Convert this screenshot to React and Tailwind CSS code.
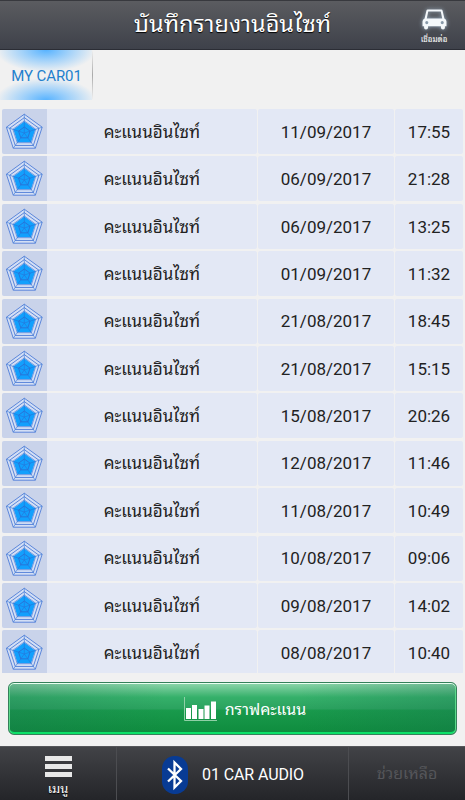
const records = [
  { date: "11/09/2017", time: "17:55" },
  { date: "06/09/2017", time: "21:28" },
  { date: "06/09/2017", time: "13:25" },
  { date: "01/09/2017", time: "11:32" },
  { date: "21/08/2017", time: "18:45" },
  { date: "21/08/2017", time: "15:15" },
  { date: "15/08/2017", time: "20:26" },
  { date: "12/08/2017", time: "11:46" },
  { date: "11/08/2017", time: "10:49" },
  { date: "10/08/2017", time: "09:06" },
  { date: "09/08/2017", time: "14:02" },
  { date: "08/08/2017", time: "10:40" },
];

function pentagon(r) {
  return [0, 1, 2, 3, 4]
    .map((i) => {
      const a = ((-90 + i * 72) * Math.PI) / 180;
      return `${(22.3 + r * Math.cos(a)).toFixed(2)},${(24 + r * Math.sin(a)).toFixed(2)}`;
    })
    .join(" ");
}

function RadarIcon() {
  return (
    <svg viewBox="0 0 45 45" className="block h-[45px] w-[45px]">
      <polygon points={pentagon(19)} fill="#d3dff5" />
      <polygon points={pentagon(11.5)} fill="#12a0fd" />
      <g fill="none" stroke="#5c86da" strokeWidth="1">
        <polygon points={pentagon(18.8)} />
        <polygon points={pentagon(15.4)} />
        <polygon points={pentagon(12)} opacity="0.8" />
      </g>
      <g fill="none" stroke="#2a6fd4">
        <polygon points={pentagon(6)} strokeWidth="0.9" />
        {pentagon(18.8)
          .split(" ")
          .map((p) => (
            <path key={p} d={`M22.3 24L${p}`} strokeWidth="0.8" opacity="0.7" />
          ))}
      </g>
    </svg>
  );
}

function CarIcon() {
  return (
    <svg
      viewBox="0 0 24 20"
      className="block h-[21px] w-[25px] drop-shadow-[0_0_2px_#9db4c8]"
    >
      <path
        fillRule="evenodd"
        fill="#f4f8fb"
        d="M5.500 0.500H18.500Q19.500 0.500 19.800 1.500L21.500 9Q23.500 9.800 23.500 12V16.500H22V18Q22 19.500 20.200 19.500Q18.200 19.500 18.200 18V16.500H5.800V18Q5.800 19.500 3.800 19.500Q2 19.500 2 18V16.500H0.500V12Q0.500 9.800 2.500 9L4.200 1.500Q4.500 0.500 5.500 0.500ZM6 2.300L4.600 9H19.400L18 2.300ZM4.600 11.500A1.500 1.500 0 1 0 4.600 14.500A1.500 1.500 0 1 0 4.600 11.500ZM19.400 11.500A1.500 1.500 0 1 0 19.400 14.500A1.500 1.500 0 1 0 19.400 11.500Z"
      />
    </svg>
  );
}

function ChartIcon() {
  return (
    <svg viewBox="0 0 33 25" className="block h-[25px] w-[33px]">
      <path d="M0.5 0V23.5H33" fill="none" stroke="#8fd0a6" />
      <path
        fill="#fff"
        d="M2 11h5v11H2zM8 8h5v14H8zM14.500 12h5v10h-5zM20.500 8.500h5V22h-5zM27 4.500h5V22h-5z"
      />
    </svg>
  );
}

function BluetoothIcon() {
  return (
    <svg viewBox="0 0 26 38" className="block h-[38px] w-[26px]">
      <rect width="26" height="38" rx="12.500" fill="#083b94" />
      <path
        d="M6 12.500L19 25L12.500 31.500V6.500L19 13L6 25.500"
        fill="none"
        stroke="#fff"
        strokeWidth="2.300"
      />
    </svg>
  );
}

function Header() {
  return (
    <header className="relative flex h-[50px] shrink-0 items-center justify-center border-t border-b border-t-[#38393e] border-b-[#2b2d35] bg-linear-to-b from-[#5b5c60] to-[#3e414a]">
      <h1 className="text-[23.5px] leading-none whitespace-nowrap text-white [text-shadow:0_1px_1px_#000]">
        บันทึกรายงานอินไซท์
      </h1>
      <button
        type="button"
        className="absolute top-2 right-[13px] flex w-9 flex-col items-center"
      >
        <CarIcon />
        <span className="mt-[5px] text-[8px] leading-[10px] whitespace-nowrap text-white">
          เชื่อมต่อ
        </span>
      </button>
    </header>
  );
}

function CarTabs() {
  return (
    <nav className="flex h-[59px] shrink-0">
      <button
        type="button"
        className="flex h-[50px] w-[92px] items-center justify-center bg-[radial-gradient(ellipse_50px_22px_at_50%_0%,#58b3ff_0%,#8ac8fccc_45%,#f1f1f100_100%),radial-gradient(ellipse_50px_22px_at_50%_100%,#58b3ff_0%,#8ac8fccc_45%,#f1f1f100_100%)] pt-0.5 pl-px text-[15px] tracking-[-0.1px] text-[#2380cd]"
      >
        MY CAR01
      </button>
      <div className="h-[50px] w-px bg-linear-to-b from-transparent via-[#aaa] to-transparent" />
    </nav>
  );
}

function RecordRow({ date, time }) {
  return (
    <li className="flex h-[45px] shrink-0 gap-px text-[17px] text-[#222]">
      <div className="flex w-[255px] overflow-hidden rounded-xs bg-[#e3e8f5]">
        <div className="w-[45px] bg-[#c9d3ea]">
          <RadarIcon />
        </div>
        <div className="flex flex-1 items-center justify-center pt-0.5 whitespace-nowrap">
          คะแนนอินไซท์
        </div>
      </div>
      <div className="flex w-[136px] items-center justify-center rounded-xs bg-[#e3e8f5] pt-0.5">
        {date}
      </div>
      <div className="flex flex-1 items-center justify-center rounded-xs bg-[#e3e8f5] pt-0.5">
        {time}
      </div>
    </li>
  );
}

function FooterBar() {
  return (
    <footer className="flex h-[54px] shrink-0 border-t border-[#55565a] bg-linear-to-b from-[#424347] to-[#242529] text-white">
      <button
        type="button"
        className="flex w-[117px] flex-col items-center border-r border-[#4c4d51] pt-[9px]"
      >
        <span className="flex flex-col gap-[3px]">
          <span className="h-[5px] w-[27px] bg-[#e8e8e8]" />
          <span className="h-[5px] w-[27px] bg-[#e8e8e8]" />
          <span className="h-[5px] w-[27px] bg-[#e8e8e8]" />
        </span>
        <span className="mt-1 text-[13px] leading-4 [text-shadow:0_1px_1px_#000]">
          เมนู
        </span>
      </button>
      <button
        type="button"
        className="flex w-[232px] items-center gap-[14px] border-r border-[#4c4d51] pt-0.5 pl-[45px] text-base tracking-[-0.1px]"
      >
        <BluetoothIcon />
        01 CAR AUDIO
      </button>
      <button
        type="button"
        disabled
        className="flex flex-1 items-center justify-center text-base text-[#55565a]"
      >
        ช่วยเหลือ
      </button>
    </footer>
  );
}

export default function App() {
  return (
    <div className="flex h-[800px] w-[465px] flex-col overflow-hidden bg-[#f1f1f1] font-[Roboto,'Noto_Sans_Thai_Looped','Noto_Sans',sans-serif]">
      <Header />
      <CarTabs />
      <ul className="flex h-[564px] shrink-0 flex-col gap-[2.4px] overflow-hidden px-0.5">
        {records.map((r) => (
          <RecordRow key={`${r.date}-${r.time}`} {...r} />
        ))}
      </ul>
      <div className="flex h-[73px] shrink-0 px-2 pt-[9px]">
        <button
          type="button"
          className="flex h-[53px] w-full items-center justify-center gap-2 rounded-md border border-[#35805a] bg-[linear-gradient(to_right,#1a6a5044_0%,transparent_35%,transparent_65%,#1a6a5044_100%),linear-gradient(to_bottom,#8fd6ac_0%,#35b06a_28%,#2ba35f_50%,#199a4c_54%,#0e8b3d_100%)] pt-0.5 pl-[25px] text-base text-white shadow-[inset_0_1px_0_#e8fff0,inset_1px_0_0_#5bd98a,inset_-1px_0_0_#5bd98a,inset_0_-2px_0_#0be168]"
        >
          <ChartIcon />
          กราฟคะแนน
        </button>
      </div>
      <FooterBar />
    </div>
  );
}
